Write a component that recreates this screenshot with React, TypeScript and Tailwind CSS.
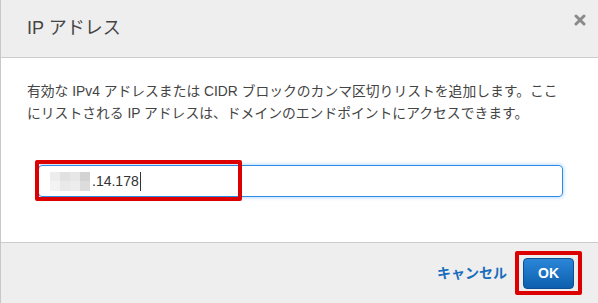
import React from "react";

const font = '"Liberation Sans", "Noto Sans CJK JP", sans-serif';

export default function App() {
  const mosaic = [
    "#ededed", "#e1e1e1", "#e7e7e7", "#d3d3d3",
    "#f3f3f3", "#e9e9e9", "#ededed", "#dcdcdc",
  ];
  return (
    <div
      className="w-[598px] h-[303px] flex flex-col bg-white border-l border-[#c8c8c8] overflow-hidden"
      style={{ fontFamily: font }}
    >
      {/* Header */}
      <div className="h-[58px] shrink-0 bg-[#eeeeee] border-b border-[#cccccc] flex justify-between pl-[26px] pr-[12px]">
        <div className="text-[18px] leading-none text-[#444] pt-[19px]">IP アドレス</div>
        <div className="pt-[14px]">
          <svg width="12" height="12" viewBox="0 0 12 12">
            <path d="M2 2 L10 10 M10 2 L2 10" stroke="#8a8a8a" strokeWidth="3" strokeLinecap="round" />
          </svg>
        </div>
      </div>

      {/* Body */}
      <div className="flex-1 bg-white pt-[23px] pl-[26px]">
        <p className="text-[13.8px] leading-[22px] text-[#444] whitespace-nowrap">
          有効な IPv4 アドレスまたは CIDR ブロックのカンマ区切りリストを追加します。ここ
          <br />
          にリストされる IP アドレスは、ドメインのエンドポイントにアクセスできます。
        </p>
        <div className="relative mt-[40px] ml-[11px] w-[525px]">
          <div className="h-[32px] border border-[#2b8be6] rounded-[4px] shadow-[0_0_4px_rgba(43,139,230,0.45)] flex items-center pl-[11px]">
            <div className="grid grid-cols-4 w-[40px] h-[19px]">
              {mosaic.map((c, i) => (
                <div key={i} style={{ backgroundColor: c }} />
              ))}
            </div>
            <span className="text-[14px] text-[#333] ml-[2px] leading-none">.14.178</span>
            <span className="w-px h-[19px] bg-[#333] ml-px" />
          </div>
          <div className="absolute left-[-3px] top-[-5px] w-[207px] h-[41px] border-[4px] border-[#dd0000] rounded-[2px]" />
        </div>
      </div>

      {/* Footer */}
      <div className="h-[61px] shrink-0 bg-[#eeeeee] border-t border-[#cccccc] flex items-center justify-end pr-[24px]">
        <span className="text-[14px] font-bold text-[#1a6dbd] mr-[16px]">キャンセル</span>
        <div className="relative">
          <button
            className="w-[51px] h-[31px] rounded-[4px] border border-[#0b4f94] bg-[linear-gradient(#2b86d8,#0d5fae)] text-white text-[14px] font-bold flex items-center justify-center"
            style={{ fontFamily: font }}
          >
            OK
          </button>
          <div className="absolute left-[-8px] top-[-7px] w-[67px] h-[44px] border-[4px] border-[#dd0000] rounded-[2px]" />
        </div>
      </div>
    </div>
  );
}
